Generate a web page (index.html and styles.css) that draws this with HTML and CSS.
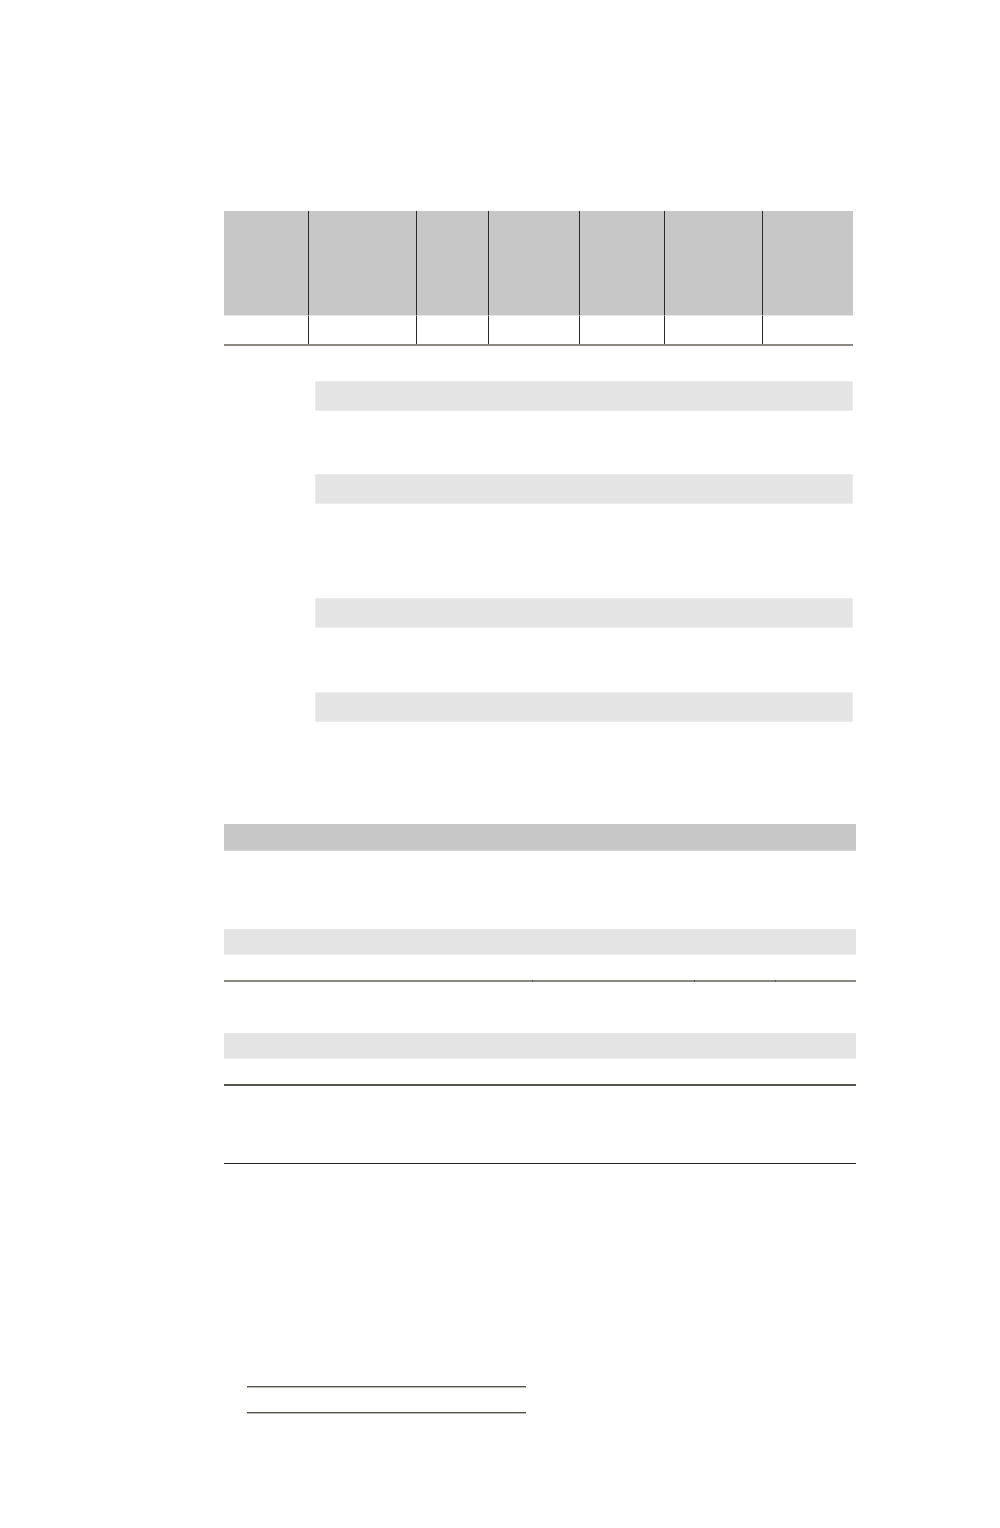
FILE: index.html
```html
<!DOCTYPE html>
<html lang="en">
<head>
<meta charset="utf-8">
<title>Document</title>
<link rel="stylesheet" href="styles.css">
</head>
<body>
<main class="page">
  <section class="spec-table">
    <div class="cell head"></div>
    <div class="cell head sep"></div>
    <div class="cell head sep"></div>
    <div class="cell head sep"></div>
    <div class="cell head sep"></div>
    <div class="cell head sep"></div>
    <div class="cell head sep"></div>
    <div class="cell body"></div>
    <div class="cell body sep"></div>
    <div class="cell body sep"></div>
    <div class="cell body sep"></div>
    <div class="cell body sep"></div>
    <div class="cell body sep"></div>
    <div class="cell body sep"></div>
  </section>

  <section class="notes">
    <div class="note-bar first"></div>
    <div class="note-bar gap-md"></div>
    <div class="note-bar gap-lg"></div>
    <div class="note-bar gap-md2"></div>
  </section>

  <section class="summary">
    <div class="summary-head"></div>
    <div class="group g1">
      <div class="group-bar"></div>
      <div class="rule rule-grey">
        <span></span><span></span><span></span><span></span>
      </div>
    </div>
    <div class="group g2">
      <div class="group-bar"></div>
      <div class="rule rule-dark">
        <span></span><span></span><span></span><span></span>
      </div>
    </div>
    <div class="group g3">
      <div class="rule rule-thin"></div>
    </div>
  </section>

  <footer class="footnotes">
    <div class="fn-line"></div>
    <div class="fn-line second"></div>
  </footer>
</main>
</body>
</html>
```

FILE: styles.css
```css
* { box-sizing: border-box; }

html, body {
  margin: 0;
  padding: 0;
  background: #ffffff;
  font-family: "Liberation Sans", Arial, sans-serif;
}

.page {
  width: 1000px;
  min-height: 1528px;
  padding: 211px 0 0 224px;
}

/* top table */
.spec-table {
  display: grid;
  width: 629px;
  grid-template-columns: 84px 108px 72px 91px 85px 98px 91px;
  grid-template-rows: 105px 28px;
  border-bottom: 2px solid #8b8882;
}

.cell.head {
  background: #c7c7c7;
  border-bottom: 1px solid #e6e6e6;
}

.cell.body {
  background: #ffffff;
}

.cell.sep {
  border-left: 1px solid #2c2a26;
}

/* indented bars */
.notes {
  margin-left: 91px;
  width: 538px;
  display: flex;
  flex-direction: column;
}

.note-bar {
  height: 30px;
  background: #e4e4e4;
  border: 1px solid #ebebeb;
}

.note-bar.first { margin-top: 35px; }
.note-bar.gap-md { margin-top: 63px; }
.note-bar.gap-lg { margin-top: 94px; }
.note-bar.gap-md2 { margin-top: 64px; }

/* lower table */
.summary {
  margin-top: 102px;
  width: 632px;
}

.summary-head {
  height: 27px;
  background: #c7c7c7;
  border-bottom: 1px solid #d6d6d6;
}

.group {
  display: flex;
  flex-direction: column;
}

.group-bar {
  height: 26px;
  background: #e4e4e4;
  border-bottom: 1px solid #ececec;
}

.g1 { padding-top: 78px; }
.g1 .group-bar { margin-bottom: 25px; }
.g2 { padding-top: 51px; }
.g2 .group-bar { margin-bottom: 25px; }
.g3 { padding-top: 77px; }

.rule {
  display: grid;
  grid-template-columns: 308px 162px 81px 81px;
}

.rule span { height: 2px; }
.rule span + span { border-left: 1px solid #5a5751; }

.rule-grey span { background: #8b8882; }
.rule-dark span { background: #58554f; }
.rule-thin { height: 1px; background: #222222; display: block; }

/* footnote separators */
.footnotes {
  margin-top: 222px;
  margin-left: 23px;
  width: 279px;
}

.fn-line {
  height: 2px;
  border-top: 1px solid #55524a;
  border-bottom: 1px solid #b9b7b1;
}

.fn-line.second { margin-top: 24px; }
```
